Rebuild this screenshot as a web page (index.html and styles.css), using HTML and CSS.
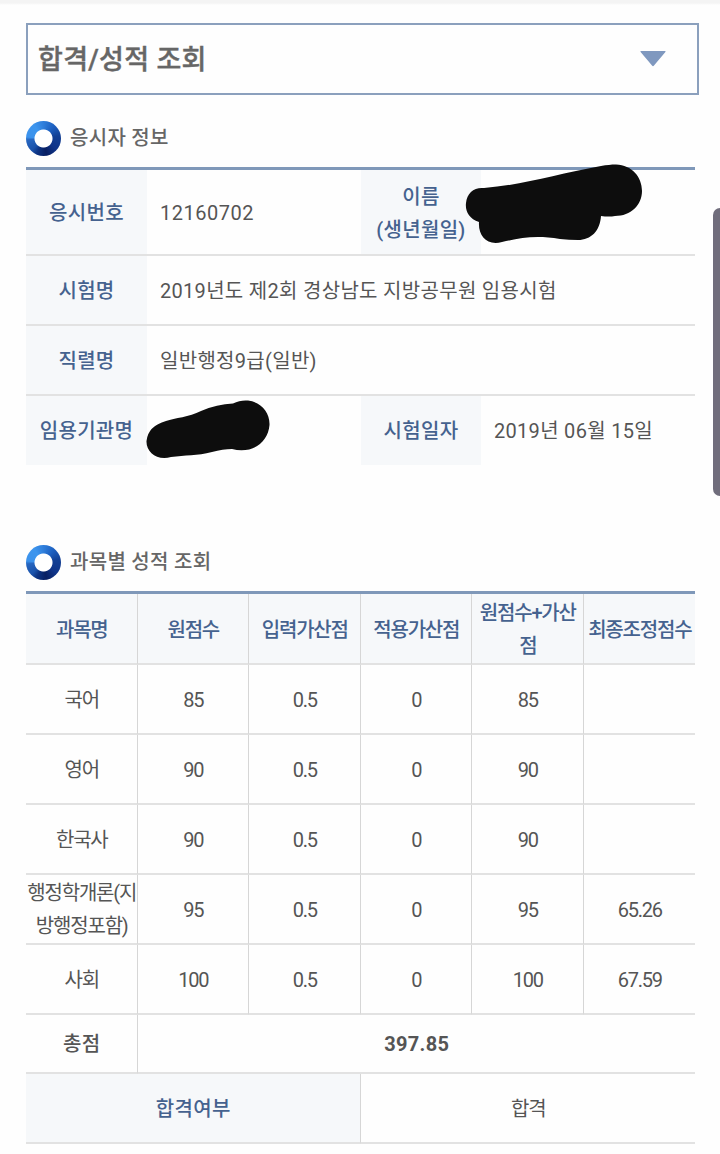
FILE: index.html
```html
<!DOCTYPE html>
<html lang="ko">
<head>
    <meta charset="UTF-8">
    <meta name="viewport" content="width=device-width, initial-scale=1.0">
    <title>합격/성적 조회</title>
    <link rel="stylesheet" href="styles.css">
</head>
<body>
    <div class="topline"></div>
    <div class="menu">
        <span>합격/성적 조회</span>
        <svg class="arrow" width="26" height="16" viewBox="0 0 26 16"><path d="M1 0H25Q26 0 25.4 1L14 14.6Q13 15.8 12 14.6L.6 1Q0 0 1 0Z" fill="#7f98bf"/></svg>
    </div>

    <h2 class="title"><i class="ring"></i>응시자 정보</h2>
    <table class="info">
        <colgroup><col class="c1"><col class="c2"><col class="c3"><col class="c4"></colgroup>
        <tr class="tall">
            <th>응시번호</th>
            <td class="number">12160702</td>
            <th>이름<br>(생년월일)</th>
            <td class="hidden">
                <svg class="mark mark-name" width="178" height="80" viewBox="0 0 178 80"><path d="M19 24C58 21 92 10 136 2C142 1 146 .5 151 .5C167 1 177 13 177 27C177 41 166 52 150 52Q144 53 136 52C135 67 126 76 113 76Q104 76 95 75C70 71 55 74 37 78C22 82 13 72 14 58C4 55 0 47 1 39C2 29 9 23 19 24Z"/></svg>
            </td>
        </tr>
        <tr>
            <th>시험명</th>
            <td colspan="3">2019년도 제2회 경상남도 지방공무원 임용시험</td>
        </tr>
        <tr>
            <th>직렬명</th>
            <td colspan="3">일반행정9급(일반)</td>
        </tr>
        <tr class="last">
            <th>임용기관명</th>
            <td class="hidden">
                <svg class="mark mark-org" width="124" height="60" viewBox="0 0 124 60"><path d="M20 21C29 18 43 17 55 11Q71 4 87 3.5C92 1 97 0 102 .5C115 2 124 12 123.500 25C122 43 106 54 86 49Q77 49 66 52C51 56 39 55 25 57C11 61 0 52 .5 41Q2 26 20 21Z"/></svg>
            </td>
            <th>시험일자</th>
            <td>2019년 06월 15일</td>
        </tr>
    </table>

    <h2 class="title second"><i class="ring"></i>과목별 성적 조회</h2>
    <table class="score">
        <tr class="head">
            <th>과목명</th>
            <th>원점수</th>
            <th>입력가산점</th>
            <th>적용가산점</th>
            <th>원점수+가산점</th>
            <th>최종조정점수</th>
        </tr>
        <tr><td>국어</td><td>85</td><td>0.5</td><td>0</td><td>85</td><td></td></tr>
        <tr><td>영어</td><td>90</td><td>0.5</td><td>0</td><td>90</td><td></td></tr>
        <tr><td>한국사</td><td>90</td><td>0.5</td><td>0</td><td>90</td><td></td></tr>
        <tr><td>행정학개론(지방행정포함)</td><td>95</td><td>0.5</td><td>0</td><td>95</td><td>65.26</td></tr>
        <tr><td>사회</td><td>100</td><td>0.5</td><td>0</td><td>100</td><td>67.59</td></tr>
        <tr class="total"><td>총점</td><td colspan="5">397.85</td></tr>
        <tr class="result"><th colspan="3">합격여부</th><td colspan="3">합격</td></tr>
    </table>

    <div class="scroll"></div>
</body>
</html>
```
FILE: styles.css
```css
* { box-sizing: border-box; }
body { margin: 0; position: relative; height: 1154px; overflow: hidden; background: #fefefe; color: #555; font-family: Roboto, "Noto Sans CJK KR", sans-serif; font-size: 20px; line-height: 33px; letter-spacing: 0.3px; }
.topline { height: 5px; background: linear-gradient(#f4f4f4 60%, #fefefe); }
.menu { display: flex; justify-content: space-between; align-items: center; width: 673px; height: 72px; margin: 18px 0 0 26px; padding: 0 31px 0 10px; border: 2px solid #8ba0bd; color: #666; font-size: 27px; font-weight: 500; -webkit-text-stroke: 0.4px #666; }
.menu span { padding-top: 2px; }
.title { display: flex; align-items: center; gap: 9px; height: 36px; margin: 25px 0 11px 26px; color: #666; font-size: 20px; font-weight: 500; }
.title.second { margin: 79px 0 11px 26px; }
.ring { width: 35px; height: 35px; border-radius: 50%; background: radial-gradient(circle, #fff 8.5px, transparent 9.5px), conic-gradient(#2f7edb 0deg, #1c5fc0 40deg, #123f94 80deg, #0f3489 130deg, #081f62 170deg, #0d3484 205deg, #1b53ab 225deg, #2666c0 265deg, #3b92ec 275deg, #3d95ee 325deg, #2f7edb 360deg); }

table { width: 669px; margin-left: 26px; table-layout: fixed; border-collapse: separate; border-spacing: 0; border-top: 3px solid #7f98b9; }
th, td { padding: 2px 0 0; border-bottom: 2px solid #e2e2e2; }
th { background: #f6f8fa; color: #45628f; font-weight: 500; }

.info tr { height: 70px; }
.info .tall { height: 86px; }
.info .tall th, .info .tall td { padding-top: 3px; }
.info td { padding-left: 13px; }
.info .number { letter-spacing: 0.5px; }
.info .last { height: 69px; }
.info .last th, .info .last td { border-bottom: 0; }
.c1 { width: 121px; }
.c2 { width: 214px; }
.c3 { width: 120px; }
.c4 { width: 214px; }
.hidden { position: relative; }
.mark { position: absolute; fill: #0d0d0d; }
.mark-name { left: -16px; top: -6px; }
.mark-org { left: -1px; top: 4px; }

.score { text-align: center; letter-spacing: -1.2px; }
.score tr { height: 70px; }
.score .head { height: 71px; }
.score .head th { padding-top: 3px; }
.score th, .score td { padding-left: 1px; border-right: 1px solid #d6d6d6; word-break: break-all; }
.score th:last-child, .score td:last-child { border-right: 0; }
.score .total { height: 59px; letter-spacing: 0.3px; }
.score .total td { font-weight: 500; }
.score .total td:last-child { font-weight: 700; }
.score .result th { letter-spacing: 0.3px; }

.scroll { position: absolute; right: 0; top: 208px; width: 7px; height: 288px; border-radius: 8px 0 0 8px; background: #706d7c; }
```
